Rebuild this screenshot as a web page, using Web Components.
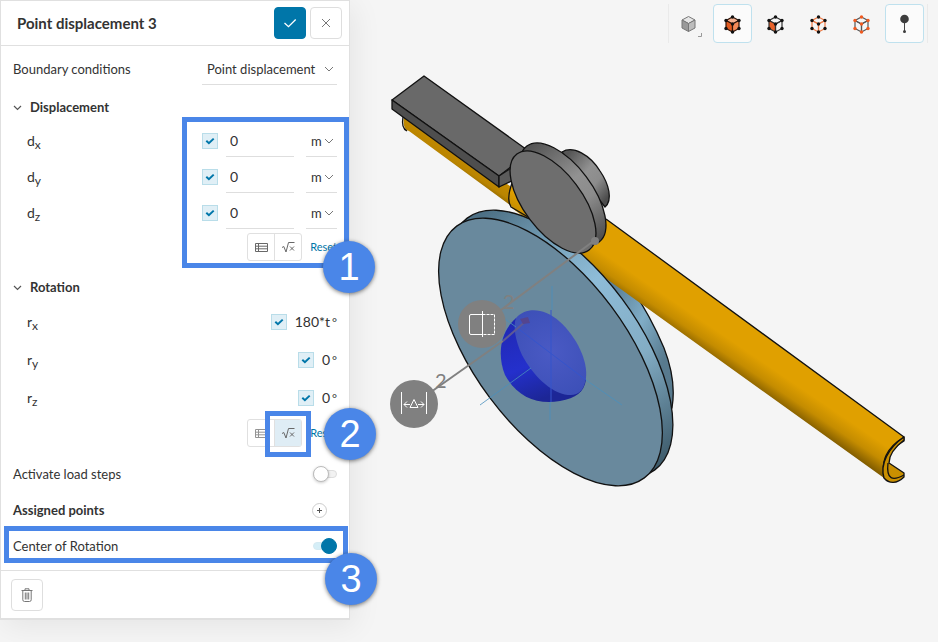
<!DOCTYPE html>
<html lang="en">
<head>
<meta charset="utf-8">
<title>Point displacement</title>
<style>
html,body{margin:0;height:100%}
body{font:13px/20px Lato,"Open Sans",sans-serif;color:#333;background:#f5f5f5;overflow:hidden}
</style>
</head>
<body>
<sim-workbench>
  <bc-panel slot="panel"></bc-panel>
  <view-toolbar slot="toolbar"></view-toolbar>
  <model-scene slot="scene"></model-scene>
</sim-workbench>
<script>
function define(name, html, setup){
  const t=document.createElement('template');
  t.innerHTML=html;
  customElements.define(name, class extends HTMLElement{
    connectedCallback(){
      if(this.shadowRoot) return;
      this.attachShadow({mode:'open'}).append(t.content.cloneNode(true));
      if(setup) setup(this,this.shadowRoot);
    }
  });
}

define('sim-workbench',`
<style>
:host{display:grid;grid-template-columns:350px minmax(0,1fr);min-height:100vh;align-items:start}
main{position:relative;height:100vh;min-width:0}
.bar{position:absolute;top:4px;right:10px;z-index:1}
aside{position:relative;z-index:2}
</style>
<aside><slot name="panel"></slot></aside>
<main><div class="bar"><slot name="toolbar"></slot></div><slot name="scene"></slot></main>`);

define('check-box',`
<style>
:host{display:inline-flex}
label{display:grid;width:16px;height:16px}
input,svg{grid-area:1/1}
input{appearance:none;margin:0;width:16px;height:16px;box-sizing:border-box;border:1px solid #b9dde9;background:#e0eff6}
svg{width:16px;height:16px;pointer-events:none;fill:none;stroke:#0076a9;stroke-width:2}
input:not(:checked)+svg{display:none}
</style>
<label><input type="checkbox" checked><svg viewBox="0 0 16 16"><path d="M4.3 7.8 6.9 10.2 11.7 5.6"/></svg></label>`,
(h,r)=>r.querySelector('input').setAttribute('aria-label',h.getAttribute('label')||''));

define('drop-down',`
<style>
:host{display:grid;align-items:center;border-bottom:1px solid #dedede;height:32px;box-sizing:border-box}
select,svg{grid-area:1/1}
select{appearance:none;border:0;margin:0;padding:0 14px 0 5px;background:none;font:inherit;color:inherit;width:100%;height:30px;outline:0;text-overflow:clip}
svg{justify-self:end;margin-right:3px;width:10px;height:10px;fill:none;stroke:#777;pointer-events:none}
</style>
<select><option></option></select><svg viewBox="0 0 10 10"><path d="M1 3 5 7 9 3"/></svg>`,
(h,r)=>{const s=r.querySelector('select');s.options[0].text=h.getAttribute('value');s.setAttribute('aria-label',h.getAttribute('label')||'');});

define('form-row',`
<style>
:host{display:flex;align-items:center;justify-content:space-between;height:36px;padding:0 12px}
:host([indent]) .name{padding-left:14px}
:host([tall]){height:38px}
:host([strong]) .name{font-weight:700}
.end{display:flex;align-items:center}
</style>
<span class="name"><slot name="name"></slot></span><span class="end"><slot></slot></span>`);

define('group-title',`
<style>
:host{display:flex;height:36px;box-sizing:border-box;padding:4px 12px 0}
button{display:flex;align-items:center;gap:8px;border:0;background:none;padding:0;font:inherit;font-weight:700;color:inherit}
svg{width:9px;height:9px;fill:none;stroke:#555;stroke-width:1.2}
</style>
<button aria-expanded="true"><svg viewBox="0 0 9 9"><path d="M1 3 4.5 6.5 8 3"/></svg><slot></slot></button>`);

define('length-field',`
<style>
:host{display:flex;align-items:center;width:135px}
input{font:inherit;font-size:14px;color:inherit;border:0;border-bottom:1px solid #dedede;background:none;width:68px;height:32px;box-sizing:border-box;padding:0 4px;margin:0 12px 0 8px;outline:0;min-width:0}
drop-down{width:31px;flex:none}
</style>
<check-box></check-box><input value="0"><drop-down value="m" label="Unit"></drop-down>`,
(h,r)=>{r.querySelector('input').setAttribute('aria-label',h.getAttribute('label'));});

define('angle-field',`
<style>:host{display:flex;align-items:center;gap:8px}output{white-space:nowrap;font-size:14px}small{font-size:12px;margin-left:2px}</style>
<check-box></check-box><output><span></span><small>°</small></output>`,
(h,r)=>{r.querySelector('span').textContent=h.getAttribute('value');});

define('input-mode',`
<style>
:host{display:flex;justify-content:flex-end;align-items:center;height:36px;box-sizing:border-box;padding:0 12px 4px;gap:8px}
div{display:flex;border:1px solid #e0e0e0;border-radius:3px;background:#fff}
button{width:26px;height:26px;box-sizing:border-box;padding:0;border:0;background:none;display:grid;place-items:center}
button+button{border-left:1px solid #e0e0e0;width:27px}
:host([formula]) button+button{background:#dfedf5}
:host([formula]) button:first-child{opacity:.7}
svg{width:13px;height:13px;fill:none;stroke:#686868}
a{color:#0076a9;font-size:11px;text-decoration:none}
</style>
<div><button aria-label="Table"><svg viewBox="0 0 13 13"><path d="M.5 2.5h12v8H.5zM.5 5.2h12M.5 7.8h12M3.5 2.5v8"/></svg></button><button aria-label="Formula"><svg viewBox="0 0 13 13"><path d="M0 6.5 1.8 5.5 4 11 6.5 1.5H12.5M8 5.5l4 4M12 5.5l-4 4"/></svg></button></div>
<a href="#">Reset</a>`);

define('toggle-switch',`
<style>
:host{display:flex}
input{appearance:none;margin:0;width:24px;height:16px;display:flex;align-items:center;position:relative}
input::before{content:"";position:absolute;left:0;right:0;top:4px;height:6px;border:1px solid #ddd;border-radius:4px;background:#f2f2f2}
input::after{content:"";width:14px;height:14px;border:1px solid #bbb;border-radius:50%;background:#fff;z-index:1;box-shadow:0 1px 3px #0003}
input:checked{justify-content:flex-end}
input:checked::before{background:#d5eef7;border-color:#d5eaf2}
input:checked::after{background:#0076a9;border-color:#0076a9;box-shadow:none}
</style>
<input type="checkbox" role="switch">`,
(h,r)=>{const i=r.querySelector('input');i.checked=h.hasAttribute('on');i.setAttribute('aria-label',h.getAttribute('label'));});

define('callout-frame',`
<style>:host{position:absolute;box-sizing:border-box;border:5px solid #4a86e8;pointer-events:none}</style>`);
define('callout-badge',`
<style>:host{position:absolute;width:52px;height:52px;border-radius:50%;background:#4a86e8;color:#fff;display:grid;place-items:center;font:38px/52px "Liberation Sans",Arial,sans-serif;box-shadow:0 1px 4px #0008}</style><slot></slot>`);

define('bc-panel',`
<style>
:host{display:block;position:relative;box-sizing:border-box;background:#fff;border:1px solid #e0e0e0;border-bottom-width:2px;box-shadow:4px 6px 28px #00000012}
header{display:flex;align-items:center;gap:4px;height:44px;padding:0 7px 0 16px;border-bottom:1px solid #e0e0e0}
h1{font-size:15px;margin:0;flex:1}
button{width:32px;height:32px;box-sizing:border-box;border:1px solid #dedede;border-radius:4px;background:#fff;padding:0;display:grid;place-items:center}
button.ok{background:#0076a9;border-color:#0076a9}
svg{width:16px;height:16px;fill:none;stroke:#777}
.ok svg{stroke:#fff;stroke-width:1.3}
.body{padding:5px 0 6px}
.last{padding-top:3px}
sub{font-size:12px;line-height:0;vertical-align:-3px}
.sym{font-size:14px}
.type{width:135px}
button.add{width:15px;height:15px;border-radius:50%;margin-right:10px;border-color:#ccc}
.add svg{width:7px;height:7px;stroke:#555}
footer{border-top:1px solid #e0e0e0;padding:8px 10px 7px}
</style>
<header><h1>Point displacement 3</h1>
<button class="ok" aria-label="Apply"><svg viewBox="0 0 16 16"><path d="M2.5 8 6.5 11.7 13.7 4.5"/></svg></button>
<button aria-label="Close"><svg viewBox="0 0 16 16"><path d="m4 4 8 8M12 4l-8 8"/></svg></button></header>
<div class="body">
<form-row><span slot="name">Boundary conditions</span><drop-down class="type" value="Point displacement" label="Boundary conditions"></drop-down></form-row>
<group-title>Displacement</group-title>
<form-row indent><span class="sym" slot="name">d<sub>x</sub></span><length-field label="dx"></length-field></form-row>
<form-row indent><span class="sym" slot="name">d<sub>y</sub></span><length-field label="dy"></length-field></form-row>
<form-row indent><span class="sym" slot="name">d<sub>z</sub></span><length-field label="dz"></length-field></form-row>
<input-mode></input-mode>
<group-title>Rotation</group-title>
<form-row indent tall><span class="sym" slot="name">r<sub>x</sub></span><angle-field value="180*t"></angle-field></form-row>
<form-row indent tall><span class="sym" slot="name">r<sub>y</sub></span><angle-field value="0"></angle-field></form-row>
<form-row indent tall><span class="sym" slot="name">r<sub>z</sub></span><angle-field value="0"></angle-field></form-row>
<input-mode formula></input-mode>
<div class="last">
<form-row><span slot="name">Activate load steps</span><toggle-switch label="Activate load steps"></toggle-switch></form-row>
<form-row strong><span slot="name">Assigned points</span><button class="add" aria-label="Add point"><svg viewBox="0 0 7 7"><path d="M3.5 1v5M1 3.5h5"/></svg></button></form-row>
<form-row><span slot="name">Center of Rotation</span><toggle-switch on label="Center of Rotation"></toggle-switch></form-row>
</div>
</div>
<footer><button aria-label="Delete"><svg viewBox="0 0 16 16"><path d="M2.5 3.5h11M6 3.5V1.8h4v1.7M3.8 3.5v9.3q0 1.7 1.7 1.7h5q1.7 0 1.7-1.7V3.5M6.3 5.5v7M8 5.5v7M9.7 5.5v7"/></svg></button></footer>
<callout-frame style="left:181px;top:116px;width:167px;height:151px"></callout-frame>
<callout-frame style="left:264px;top:410px;width:46px;height:46px"></callout-frame>
<callout-frame style="left:3px;top:525px;width:344px;height:37px"></callout-frame>
<callout-badge style="left:322px;top:240px">1</callout-badge>
<callout-badge style="left:323px;top:407px">2</callout-badge>
<callout-badge style="left:324px;top:552px">3</callout-badge>`);

define('view-toolbar',`
<style>
:host{display:flex;gap:4px;padding:0 3px 0 1px;border:solid #eaeaea;border-width:0 1px}
button{width:39px;height:39px;box-sizing:border-box;padding:0;border:1px solid transparent;border-radius:4px;background:none;display:grid;place-items:center}
button.on{background:#fbfbfb;border-color:#bfe1ee}
svg{width:37px;height:37px;fill:none}
</style>
<button aria-label="Render mode"><svg viewBox="0 0 37 37"><g stroke="#777" stroke-linejoin="round"><path fill="#e6e6e6" d="m17.5 11.500 6.500 3.500-6.500 3.500-6.500-3.500z"/><path fill="#999" d="M11 15v8l6.500 3.500v-8z"/><path fill="#bdbdbd" d="M24 15v8l-6.500 3.500v-8z"/></g><path d="M30.500 28v3.500H27" stroke="#999"/></svg></button>
<button class="on" aria-label="Volumes"><svg viewBox="0 0 37 37"></svg></button>
<button aria-label="Faces"><svg viewBox="0 0 37 37"></svg></button>
<button aria-label="Vertices"><svg viewBox="0 0 37 37"></svg></button>
<button aria-label="Edges"><svg viewBox="0 0 37 37"></svg></button>
<button class="on" aria-label="Probe"><svg viewBox="0 0 37 37"><path d="M18.500 14v13" stroke="#444"/><circle cx="18.500" cy="14" r="4.300" fill="#3d3d3d"/><circle cx="18.500" cy="26.500" r="1.500" fill="#3d3d3d"/></svg></button>`,
(h,r)=>{
  const s=r.querySelectorAll('svg');
  const cube=(edge,dot,left,right,top)=>`<g stroke="${edge}" stroke-width="1.200"><path fill="${top}" d="m18.500 12 6.500 3.500-6.500 3.500-6.500-3.500z"/><path fill="${left}" d="M12 15.500v8l6.500 3.500v-8z"/><path fill="${right}" d="M25 15.500v8l-6.500 3.500v-8z"/></g><g fill="${dot}">`+[[18.5,12],[25,15.5],[12,15.5],[18.5,19],[12,23.5],[25,23.5],[18.5,27]].map(p=>`<circle cx="${p[0]}" cy="${p[1]}" r="1.700"/>`).join('')+'</g>';
  s[1].innerHTML=cube('#301408','#111','#e05a20','#f28a58','#f5b292');
  s[2].innerHTML=cube('#333','#111','#e8622a','none','none');
  s[3].innerHTML=cube('#ee7a45','#111','none','none','none');
  s[4].innerHTML=cube('#555','#f05a20','none','none','none');
});

define('model-scene',`
<style>:host{display:block;height:100%}svg{display:block;width:100%;height:100%}text{font-family:Lato,sans-serif;font-size:20px;fill:#808080}</style>
<svg viewBox="350 0 588 642" preserveAspectRatio="xMinYMin meet" role="img" aria-label="3D model of a crank mechanism">
<defs>
<linearGradient id="tube" gradientUnits="userSpaceOnUse" x1="740" y1="312" x2="708" y2="359"><stop stop-color="#e0a000"/><stop offset=".5" stop-color="#e0a000"/><stop offset=".75" stop-color="#c48c00"/><stop offset="1" stop-color="#7a5700"/></linearGradient>
<linearGradient id="tube2" gradientUnits="userSpaceOnUse" x1="470" y1="160" x2="458" y2="178"><stop stop-color="#c48b00"/><stop offset=".5" stop-color="#b98400"/><stop offset="1" stop-color="#6f4f00"/></linearGradient>
<linearGradient id="rim"><stop offset=".02" stop-color="#4d7085"/><stop offset=".25" stop-color="#7ba6bf"/><stop offset=".4" stop-color="#8ebcd8"/><stop offset=".68" stop-color="#83adc5"/><stop offset="1" stop-color="#3d5a6a"/></linearGradient>
<linearGradient id="back" x1="0" y1="0" x2="1" y2="1"><stop offset=".3" stop-color="#5b8199"/><stop offset=".55" stop-color="#80adc7"/><stop offset=".8" stop-color="#587a8e"/></linearGradient>
<linearGradient id="grey" x1="0" y1="0" x2="1" y2="1"><stop offset=".1" stop-color="#555"/><stop offset=".45" stop-color="#929292"/><stop offset=".65" stop-color="#8c8c8c"/><stop offset=".9" stop-color="#4c4c4c"/></linearGradient>
<linearGradient id="greyrim"><stop offset=".02" stop-color="#555"/><stop offset=".45" stop-color="#929292"/><stop offset=".65" stop-color="#8c8c8c"/><stop offset="1" stop-color="#4c4c4c"/></linearGradient>
<radialGradient id="ball" gradientUnits="userSpaceOnUse" cx="551" cy="352" r="48"><stop stop-color="#4a5ac4"/><stop offset="1" stop-color="#3d50b8"/></radialGradient>
<linearGradient id="bowl" x1="0" y1="0" x2=".4" y2="1"><stop stop-color="#2027b0"/><stop offset=".6" stop-color="#2430cc"/><stop offset="1" stop-color="#1c2696"/></linearGradient>
</defs>
<g stroke="#111" stroke-width="1.300" stroke-linejoin="round">
<path fill="url(#back)" d="M585 246C625 268 650 315 664 348 673 371 675 390 672 408L640 380Z"/>
<path fill="url(#tube2)" stroke="none" d="M404 116 510 186 525 216 409 131Q402 130 404 116Z"/>
<path fill="none" d="M403 117Q401 128 407 131"/>
<path fill="url(#tube)" stroke="none" d="M512 184 606 219 904 437Q882 455 884 478L590 267 512 208Q506 196 512 184Z"/>
<path fill="none" d="M512 183Q506 200 511 207L528 217M606 219 904 437V441C890 449 884 460 890 471M904 437C886 448 881 461 884 478"/>
<path fill="#c98f00" d="M904 437C888 448 880 464 884 478 889 484 897 484 904 477V473L889 463C889 455 895 447 904 440Z"/>
<path fill="none" d="M888 463C886 480 893 481 904 475"/>
<ellipse rx="157" ry="76" fill="url(#rim)" transform="translate(561 344) rotate(53.300)"/>
<ellipse rx="157" ry="76" fill="#69899d" transform="translate(550.500 352) rotate(53.300)"/>
<path fill="#696969" d="M392 100 424 76 530 152 499 176Z"/><path fill="#4e4e4e" d="M392 100 499 176V187L392 109Z"/><path fill="#5b5b5b" d="M499 176 520 162V177L499 187Z"/>
<path fill="url(#grey)" d="M562 152C573 145 590 155 600 171 609 184 613 200 605 207Z"/>
<ellipse rx="60" ry="29" fill="url(#greyrim)" transform="translate(563 194) rotate(53)"/>
<ellipse rx="60" ry="29" fill="#6e6e6e" transform="translate(553 202) rotate(53)"/>
</g>
<path fill="url(#bowl)" d="M516 318C500 332 497 355 505 375 517 397 537 405 560 401 576 398 584 392 586 380Z"/>
<path fill="url(#ball)" d="M516 318C527 306 545 309 559 321 577 337 588 361 586 378 584 391 578 396 568 395 550 393 533 375 522 355 515 340 513 326 516 318Z"/>
<g stroke="#4a90bd" fill="none"><path opacity=".8" d="M552 286v24M550 402v18M480 405l51-37M586 380l36 25M505 319l11 8"/><path stroke="#3554cc" d="M551 310v92M516 327l70 53"/></g>
<g stroke="#808080" stroke-width="2" fill="none"><path d="M482 324 595 240"/><path d="M414 404 503 341"/><path stroke="#5e5a94" d="M503 341 526 321"/></g>
<path fill="#54458f" d="m520 319 8-2 2 6-7 1z"/><circle cx="595" cy="241" r="4" fill="#808080"/>
<g fill="#808080"><circle cx="482" cy="324" r="24"/><circle cx="414" cy="404" r="24"/></g>
<g stroke="#fff" fill="none"><path d="M482.500 314.500H471q-1.500 0-1.500 1.500v17q0 1.500 1.500 1.500h11.500M482.500 311v26"/><path stroke-dasharray="3 1" d="M482.500 314.500H494.500V334.500H482.500"/><path d="M401.500 392v22M426.500 392v22M404 404.500h6M418 404.500h6M407 401.500l-3 3 3 3M421 401.500l3 3-3 3M410 407.500h8L414 399.500z"/></g>
<text x="503" y="309">2</text><text x="435" y="388">2</text>
</svg>`);
</script>
</body>
</html>
